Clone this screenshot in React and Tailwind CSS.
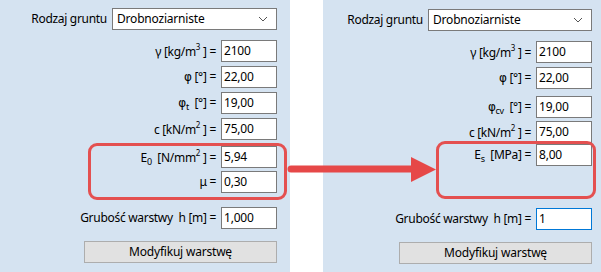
import React from "react";

const font = { fontFamily: '"Noto Sans", "Segoe UI", sans-serif' };

function Input({ value, focused }) {
  return (
    <div
      className={`w-[56px] h-[22px] bg-white border flex items-center pl-[2px] text-[12px] text-black tracking-[-0.2px] ${
        focused ? "border-[#0078d7]" : "border-[#7a7a7a]"
      }`}
    >
      {value}
    </div>
  );
}

function Row({ label, value, mt, focused }) {
  return (
    <div className={`flex items-center justify-end gap-[5px] h-[22px] ${mt}`}>
      <div className="text-[12px] text-black whitespace-pre leading-none tracking-[-0.3px]">{label}</div>
      <Input value={value} focused={focused} />
    </div>
  );
}

function Select({ w }) {
  return (
    <div className={`${w} h-[22px] bg-white border border-[#7a7a7a] flex items-center justify-between pl-[4px] pr-[8px] text-[12px] text-black tracking-[-0.2px]`}>
      <span>Drobnoziarniste</span>
      <svg width="10" height="6" viewBox="0 0 10 6">
        <polyline points="1,1 5,5 9,1" fill="none" stroke="#555" strokeWidth="1" />
      </svg>
    </div>
  );
}

function Button() {
  return (
    <div className="w-[193px] h-[22px] bg-[#e1e1e1] border border-[#adadad] flex items-center justify-center text-[12px] text-black tracking-[-0.2px]">
      Modyfikuj warstwę
    </div>
  );
}

const sup = (t) => <sup className="text-[8px] relative top-[-1px] align-super leading-none">{t}</sup>;
const sub = (t) => <span className="text-[9px] relative top-[3px] leading-none">{t}</span>;
const phi = () => (
  <span className="text-[12px]" style={{ fontFamily: '"DejaVu Sans", sans-serif' }}>
    φ
  </span>
);

export default function App() {
  return (
    <div className="relative w-[601px] h-[272px] bg-white flex gap-[33px] overflow-hidden" style={font}>
      {/* Left panel */}
      <div className="w-[290px] h-full bg-[#d5e3f1] flex flex-col items-end pr-[13px] pt-[8px]">
        <div className="flex items-center gap-[5px] h-[22px]">
          <div className="text-[12px] text-black tracking-[-0.3px]">Rodzaj gruntu</div>
          <Select w="w-[165px]" />
        </div>
        <Row mt="mt-[10px]" value="2100" label={<>γ [kg/m{sup("3")} ] =</>} />
        <Row mt="mt-[4px]" value="22,00" label={<>{phi()} [°] =</>} />
        <Row mt="mt-[4px]" value="19,00" label={<>{phi()}{sub("t")}  [°] =</>} />
        <Row mt="mt-[4px]" value="75,00" label={<>c [kN/m{sup("2")} ] =</>} />
        <Row mt="mt-[6px]" value="5,94" label={<>E{sub("0")}  [N/mm{sup("2")} ] =</>} />
        <Row mt="mt-[3px]" value="0,30" label={<>μ =</>} />
        <Row mt="mt-[14px]" value="1,000" label={<>Grubość warstwy  h [m] =</>} />
        <div className="mt-[12px]">
          <Button />
        </div>
      </div>

      {/* Right panel */}
      <div className="flex-1 h-full bg-[#d5e3f1] flex flex-col items-end pr-[9px] pt-[9px]">
        <div className="flex items-center gap-[5px] h-[22px]">
          <div className="text-[12px] text-black tracking-[-0.3px]">Rodzaj gruntu</div>
          <Select w="w-[164px]" />
        </div>
        <Row mt="mt-[10px]" value="2100" label={<>γ [kg/m{sup("3")} ] =</>} />
        <Row mt="mt-[4px]" value="22,00" label={<>{phi()} [°] =</>} />
        <Row mt="mt-[7px]" value="19,00" label={<>{phi()}{sub("cv")}  [°] =</>} />
        <Row mt="mt-[3px]" value="75,00" label={<>c [kN/m{sup("2")} ] =</>} />
        <Row mt="mt-[1px]" value="8,00" label={<>E{sub("s")}  [MPa] =</>} />
        <Row mt="mt-[42px]" value="1" focused label={<>Grubość warstwy  h [m] =</>} />
        <div className="mt-[12px]">
          <Button />
        </div>
      </div>

      {/* Annotation overlays */}
      <div className="absolute left-[88px] top-[143px] w-[199px] h-[57px] border-[3px] border-[#e45050] rounded-[9px]" />
      <div className="absolute left-[436px] top-[141px] w-[160px] h-[58px] border-[3px] border-[#e45050] rounded-[9px]" />
      <svg className="absolute left-0 top-0" width="601" height="272" viewBox="0 0 601 272">
        <line x1="291" y1="169" x2="414" y2="169" stroke="#e64848" strokeWidth="7" strokeLinecap="round" />
        <polygon points="411,157 436,169.5 411,182" fill="#e64848" />
      </svg>
    </div>
  );
}
